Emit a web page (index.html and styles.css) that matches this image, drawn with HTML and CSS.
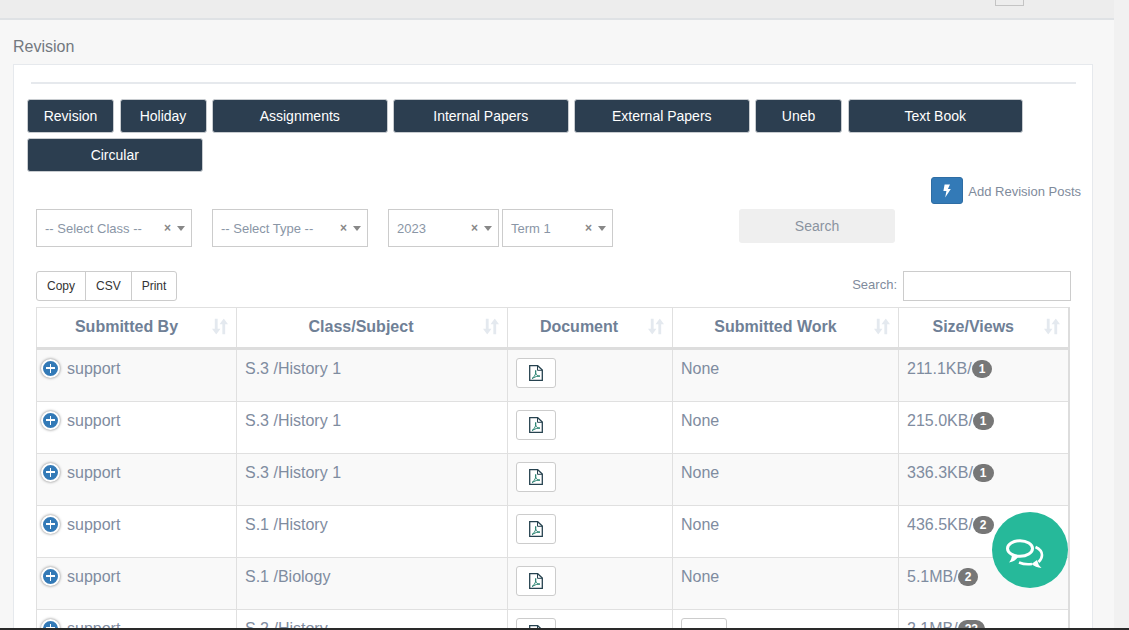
FILE: index.html
```html
<!DOCTYPE html>
<html lang="en">
<head>
    <meta charset="UTF-8">
    <meta name="viewport" content="width=device-width, initial-scale=1.0">
    <title>Revision</title>
    <link rel="stylesheet" href="styles.css">
</head>
<body>
    <div class="screen">
        <div class="main-area">
            <div class="top-bar"><span class="top-btn"></span></div>
            <div class="content">
                <h3 class="page-title">Revision</h3>
                <div class="panel">
                    <div class="panel-rule"></div>

                    <div class="category-btns">
                        <a class="cat-btn cat-sm">Revision</a>
                        <a class="cat-btn cat-sm">Holiday</a>
                        <a class="cat-btn cat-lg">Assignments</a>
                        <a class="cat-btn cat-lg">Internal Papers</a>
                        <a class="cat-btn cat-lg">External Papers</a>
                        <a class="cat-btn cat-sm">Uneb</a>
                        <a class="cat-btn cat-lg">Text Book</a>
                        <a class="cat-btn cat-lg">Circular</a>
                    </div>

                    <div class="add-row">
                        <span class="add-btn">
                            <svg width="8" height="14" viewBox="0 0 8 13"><path d="M1.6 0H7L4.9 4.4H7.8L2.2 13 3.4 6.4H.4z" fill="#fff"/></svg>
                        </span>
                        <span class="add-label">Add Revision Posts</span>
                    </div>

                    <div class="filters">
                        <div class="select select-wide select-gap"><span>-- Select Class --</span><i class="clear">×</i><i class="caret"></i></div>
                        <div class="select select-wide select-gap"><span>-- Select Type --</span><i class="clear">×</i><i class="caret"></i></div>
                        <div class="select select-short"><span>2023</span><i class="clear">×</i><i class="caret"></i></div>
                        <div class="select select-short"><span>Term 1</span><i class="clear">×</i><i class="caret"></i></div>
                        <button class="search-btn">Search</button>
                    </div>

                    <div class="table-tools">
                        <div class="export-btns">
                            <a>Copy</a><a>CSV</a><a>Print</a>
                        </div>
                        <label class="table-search">Search: <input type="text"></label>
                    </div>

                    <table class="data-table">
                        <thead>
                            <tr>
                                <th class="col-by">Submitted By<svg class="sort" viewBox="0 0 17 17"><use href="#sort-icon"/></svg></th>
                                <th class="col-class">Class/Subject<svg class="sort" viewBox="0 0 17 17"><use href="#sort-icon"/></svg></th>
                                <th class="col-doc">Document<svg class="sort" viewBox="0 0 17 17"><use href="#sort-icon"/></svg></th>
                                <th class="col-work">Submitted Work<svg class="sort" viewBox="0 0 17 17"><use href="#sort-icon"/></svg></th>
                                <th class="col-size">Size/Views<svg class="sort" viewBox="0 0 17 17"><use href="#sort-icon"/></svg></th>
                            </tr>
                        </thead>
                        <tbody>
                            <tr>
                                <td><div class="by-cell"><i class="expand"></i>support</div></td>
                                <td>S.3 /History 1</td>
                                <td><a class="doc-btn"><svg class="pdf" viewBox="0 0 14 16"><use href="#pdf-icon"/></svg></a></td>
                                <td>None</td>
                                <td>211.1KB/<span class="badge">1</span></td>
                            </tr>
                            <tr>
                                <td><div class="by-cell"><i class="expand"></i>support</div></td>
                                <td>S.3 /History 1</td>
                                <td><a class="doc-btn"><svg class="pdf" viewBox="0 0 14 16"><use href="#pdf-icon"/></svg></a></td>
                                <td>None</td>
                                <td>215.0KB/<span class="badge">1</span></td>
                            </tr>
                            <tr>
                                <td><div class="by-cell"><i class="expand"></i>support</div></td>
                                <td>S.3 /History 1</td>
                                <td><a class="doc-btn"><svg class="pdf" viewBox="0 0 14 16"><use href="#pdf-icon"/></svg></a></td>
                                <td>None</td>
                                <td>336.3KB/<span class="badge">1</span></td>
                            </tr>
                            <tr>
                                <td><div class="by-cell"><i class="expand"></i>support</div></td>
                                <td>S.1 /History</td>
                                <td><a class="doc-btn"><svg class="pdf" viewBox="0 0 14 16"><use href="#pdf-icon"/></svg></a></td>
                                <td>None</td>
                                <td>436.5KB/<span class="badge">2</span></td>
                            </tr>
                            <tr>
                                <td><div class="by-cell"><i class="expand"></i>support</div></td>
                                <td>S.1 /Biology</td>
                                <td><a class="doc-btn"><svg class="pdf" viewBox="0 0 14 16"><use href="#pdf-icon"/></svg></a></td>
                                <td>None</td>
                                <td>5.1MB/<span class="badge">2</span></td>
                            </tr>
                            <tr>
                                <td><div class="by-cell"><i class="expand"></i>support</div></td>
                                <td>S.2 /History</td>
                                <td><a class="doc-btn"><svg class="pdf" viewBox="0 0 14 16"><use href="#pdf-icon"/></svg></a></td>
                                <td><a class="doc-btn work-btn"><svg width="16" height="16" viewBox="0 0 16 16"><path d="M0 8q8-9 16 0-8 9-16 0z" fill="#2b3440"/></svg></a></td>
                                <td>2.1MB/<span class="badge">22</span></td>
                            </tr>
                        </tbody>
                    </table>
                </div>
            </div>
        </div>

        <a class="chat-btn">
            <svg width="38" height="30" viewBox="0 0 38 30" fill="none" stroke="#fff" stroke-width="3">
                <ellipse cx="14" cy="9.500" rx="12.500" ry="7.800"/>
                <path d="M6 15q0 5-3 8.500q6-1 9-5.500z" fill="#fff" stroke="none"/>
                <path d="M29.500 8q6.500 3 6.500 8q0 4-3.500 7M26 25q-7 1-13-1.500" stroke-width="2.600"/>
                <path d="M31 21q1 5 4.500 8q-6-.5-10-4z" fill="#fff" stroke="none"/>
            </svg>
        </a>
        <div class="bottom-line"></div>
    </div>

    <svg class="defs" width="0" height="0">
        <symbol id="pdf-icon" viewBox="0 0 14 16">
            <path d="M.7.7h8l4.600 4.300v10.300H.7z" fill="none" stroke="#26424f" stroke-width="1.300"/>
            <path d="M8.500.7v4.600h4.800" fill="none" stroke="#26424f" stroke-width="1"/>
            <path d="M3 13.500q2.500-1.500 3.500-4.500q.6-2 .2-3.600q-.8 2 .6 4.100q1.300 1.700 3.700 1.600q-3.500-.4-8 2.400z" fill="none" stroke="#1c7a68" stroke-width=".9"/>
        </symbol>
        <symbol id="sort-icon" viewBox="0 0 17 17">
            <path d="M3 0h3v11h3l-4.500 6L0 11h3z" fill="#e4e9ef"/>
            <path d="M12.500 0L17 6h-3v11h-3V6H8z" fill="#e4e9ef"/>
        </symbol>
    </svg>
</body>
</html>
```

FILE: styles.css
```css
* {
    margin: 0;
    padding: 0;
    box-sizing: border-box;
}

html, body {
    height: 100%;
    overflow: hidden;
}

body {
    font-family: 'Liberation Sans', Arial, sans-serif;
    font-size: 14px;
    background-color: #f1f1f1;
    color: #7b8a9c;
}

.screen {
    position: relative;
    width: 1129px;
    height: 630px;
    overflow: hidden;
    display: flex;
    flex-direction: column;
}

.main-area {
    width: 1114px;
    flex: 1;
    min-height: 0;
    overflow: hidden;
    background-color: #f7f7f7;
}

.top-bar {
    height: 20px;
    background-color: #ededed;
    border-bottom: 2px solid #dfe2e5;
    display: flex;
    justify-content: flex-end;
    padding-right: 90px;
}

.top-btn {
    width: 29px;
    height: 6px;
    border: 1px solid #c4c4c4;
    border-top: none;
}

.content {
    padding: 18px 21px 0 13px;
}

.page-title {
    font-size: 16px;
    font-weight: normal;
    line-height: 18px;
    color: #73797f;
    margin-bottom: 8px;
}

.panel {
    background-color: #fff;
    border: 1px solid #e6e9ed;
    padding: 17px 0 0 13px;
}

.panel-rule {
    height: 2px;
    margin: 0 16px 0 4px;
    background-color: #e6e9ed;
}

/* Botoes de categoria */
.category-btns {
    display: flex;
    flex-wrap: wrap;
    gap: 5px 5.500px;
    margin-top: 15px;
    width: 1010px;
}

.cat-btn {
    height: 34px;
    line-height: 32px;
    text-align: center;
    color: #fff;
    background-color: #2c3e50;
    border: 1px solid #c8ccd0;
    border-radius: 3px;
}

.cat-sm {
    width: 87px;
}

.cat-lg {
    width: 175.500px;
}

.add-row {
    display: flex;
    align-items: center;
    justify-content: flex-end;
    gap: 5px;
    height: 27px;
    margin-top: 5px;
    padding-right: 11px;
}

.add-btn {
    width: 32px;
    height: 27px;
    background-color: #337ab7;
    border: 1px solid #2e6da4;
    border-radius: 3px;
    display: flex;
    align-items: center;
    justify-content: center;
}

.add-label {
    font-size: 13px;
    line-height: 17px;
    padding-top: 2px;
    color: #7f8b9c;
}

.filters {
    display: flex;
    align-items: flex-start;
    margin-top: 5px;
    padding-left: 9px;
}

.select {
    display: flex;
    align-items: center;
    height: 38px;
    border: 1px solid #ccc;
    padding: 0 6px 0 8px;
    font-size: 13px;
    color: #8a96a6;
}

.select span {
    flex: 1;
    white-space: nowrap;
}

.select-wide {
    width: 156px;
}

.select-gap {
    margin-right: 20px;
}

.select-short {
    width: 111px;
    margin-right: 3px;
}

.clear {
    font-style: normal;
    font-weight: bold;
    font-size: 12px;
    color: #888;
    margin-right: 6px;
}

.caret {
    width: 0;
    height: 0;
    border-left: 4px solid transparent;
    border-right: 4px solid transparent;
    border-top: 5px solid #888;
}

.search-btn {
    width: 156px;
    height: 34px;
    margin-left: 123px;
    border: none;
    border-radius: 3px;
    background-color: #efefef;
    color: #8a93a0;
    font-family: inherit;
    font-size: 14px;
}

.table-tools {
    display: flex;
    justify-content: space-between;
    align-items: flex-start;
    margin-top: 24px;
    padding: 0 21px 0 9px;
}

.export-btns {
    display: flex;
    height: 30px;
    border: 1px solid #ccc;
    border-radius: 3px;
}

.export-btns a {
    font-size: 12px;
    line-height: 28px;
    color: #333;
    padding: 0 10px;
    border-left: 1px solid #ccc;
}

.export-btns a:first-child {
    border-left: none;
}

.table-search {
    display: flex;
    align-items: flex-start;
    gap: 6px;
    height: 30px;
    font-size: 13px;
    line-height: 28px;
    color: #7f8b9c;
}

.table-search input {
    width: 168px;
    height: 30px;
    border: 1px solid #ccc;
}

/* Tabela */
.data-table {
    width: 1032px;
    margin: 6px 0 0 9px;
    border-collapse: collapse;
    table-layout: fixed;
    font-size: 16px;
}

.data-table th, .data-table td {
    border: 1px solid #e0e0e0;
    padding: 8px;
    vertical-align: top;
    line-height: 22px;
}

.data-table th {
    position: relative;
    height: 41px;
    padding-right: 28px;
    text-align: center;
    color: #6f8096;
    border-bottom: 3px solid #ddd;
}

.data-table td {
    height: 52px;
    color: #7f8ca0;
}

.data-table tbody tr:first-child td {
    height: 53px;
}

.data-table tbody tr:nth-child(odd) {
    background-color: #f9f9f9;
}

.data-table th:last-child, .data-table td:last-child {
    border-right: 2px solid #ddd;
}

.col-by { width: 200px; }
.col-class { width: 271px; }
.col-doc { width: 165px; }
.col-work { width: 226px; }
.col-size { width: 170px; }

.data-table .col-class, .data-table .col-doc {
    padding-right: 30px;
}

.sort {
    position: absolute;
    right: 8px;
    top: 10px;
    width: 16px;
    height: 17px;
}

.by-cell {
    display: flex;
    align-items: center;
    gap: 7px;
    margin-left: -4px;
}

.expand {
    position: relative;
    flex: none;
    width: 19px;
    height: 19px;
    margin-top: -2px;
    border: 2px solid #fff;
    border-radius: 50%;
    background-color: #337ab7;
    box-shadow: 0 0 3px #777;
}

.expand::before, .expand::after {
    content: "";
    position: absolute;
    background-color: #fff;
}

.expand::before {
    left: 3px;
    top: 6.750px;
    width: 9px;
    height: 1.500px;
}

.expand::after {
    left: 6.750px;
    top: 3px;
    width: 1.500px;
    height: 9px;
}

.doc-btn {
    display: flex;
    align-items: center;
    justify-content: center;
    width: 40px;
    height: 30px;
    background-color: #fff;
    border: 1px solid #ccc;
    border-radius: 3px;
}

.work-btn {
    width: 46px;
}

.pdf {
    width: 14px;
    height: 16px;
}

.badge {
    display: inline-block;
    min-width: 10px;
    padding: 3px 7px;
    font-size: 12px;
    font-weight: bold;
    line-height: 12px;
    color: #fff;
    background-color: #777;
    border-radius: 10px;
    vertical-align: 1px;
}

.chat-btn {
    position: absolute;
    left: 992px;
    top: 512px;
    width: 76px;
    height: 76px;
    padding: 7px 11px 0 0;
    border-radius: 50%;
    background-color: #26b99a;
    display: flex;
    align-items: center;
    justify-content: center;
}

.bottom-line {
    height: 2px;
    background-color: #2a2a2a;
}

.defs {
    position: absolute;
}
```
